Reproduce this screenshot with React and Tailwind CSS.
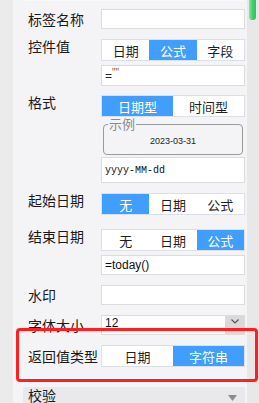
import React from "react";

const font = { fontFamily: '"Noto Sans CJK SC", "Noto Sans", sans-serif' };

function Seg({ items, active }) {
  return (
    <div className="flex h-[22px] w-[144px] border border-[#dcdfe6] bg-white">
      {items.map((t, i) => (
        <div
          key={t}
          className={
            "flex-1 flex items-center justify-center text-[13px] leading-none " +
            (i === active ? "bg-[#409eff] text-white" : "text-[#1f1f1f]")
          }
        >
          {t}
        </div>
      ))}
    </div>
  );
}

function Input({ children, h = "h-[20px]", cls = "" }) {
  return (
    <div className={"w-[144px] border border-[#dcdcdc] bg-white flex items-center px-[3px] " + h + " " + cls}>
      {children}
    </div>
  );
}

function Label({ children, top }) {
  return (
    <div
      className={
        "w-[73px] shrink-0 text-[14px] text-[#1a1a1a] " +
        (top ? "leading-[14px]" : "leading-[20px]")
      }
    >
      {children}
    </div>
  );
}

export default function App() {
  return (
    <div className="relative flex w-[259px] h-[403px] overflow-hidden bg-[#ebebeb]" style={font}>
      <div className="w-[13px] shrink-0 bg-[#ebebeb]" />
      <div className="w-[234px] shrink-0 bg-[#f4f4f6] pl-[10px] pr-[2px] flex flex-col">
        <div className="h-[3px] bg-[#f9f9fa]" />
        <div className="pl-[5px] flex flex-col">
          <div className="mt-[8px] flex items-center">
            <Label>标签名称</Label>
            <Input />
          </div>

          <div className="mt-[10px] flex items-start">
            <Label top>控件值</Label>
            <div className="flex flex-col">
              <Seg items={["日期", "公式", "字段"]} active={1} />
              <Input h="h-[21px]" cls="mt-[4px]">
                <span className="text-[12px] text-[#222]" style={{ fontFamily: '"Liberation Sans", sans-serif' }}>
                  =<span className="relative top-[-4px] text-[10px] text-[#a0522d]">""</span>
                </span>
              </Input>
            </div>
          </div>

          <div className="mt-[9px] flex items-start">
            <Label top>格式</Label>
            <div className="flex flex-col">
              <Seg items={["日期型", "时间型"]} active={0} />
              <fieldset className="ml-[2px] w-[140px] h-[38px] border border-[#9a9a9a] rounded-[4px] px-[4px] pb-[2px] m-0">
                <legend className="text-[13px] leading-[14px] text-[#8a8a8a] px-[1px]">示例</legend>
                <div
                  className="text-center text-[9px] leading-[12px] text-[#222] mt-[4px]"
                  style={{ fontFamily: '"Liberation Sans", sans-serif' }}
                >
                  2023-03-31
                </div>
              </fieldset>
              <Input h="h-[26px]" cls="mt-[2px]">
                <span className="text-[10px] text-[#111]" style={{ fontFamily: '"Liberation Mono", monospace' }}>
                  yyyy-MM-dd
                </span>
              </Input>
            </div>
          </div>

          <div className="mt-[10px] flex items-start">
            <Label top>起始日期</Label>
            <Seg items={["无", "日期", "公式"]} active={0} />
          </div>

          <div className="mt-[14px] flex items-start">
            <Label top>结束日期</Label>
            <div className="flex flex-col">
              <Seg items={["无", "日期", "公式"]} active={2} />
              <Input cls="mt-[4px]">
                <span className="text-[12px] text-[#111]" style={{ fontFamily: '"Liberation Sans", sans-serif' }}>
                  =today()
                </span>
              </Input>
            </div>
          </div>

          <div className="mt-[10px] flex items-center">
            <Label>水印</Label>
            <Input />
          </div>

          <div className="mt-[10px] flex items-center">
            <Label>字体大小</Label>
            <div className="w-[144px] h-[20px] flex border border-[#dcdcdc]">
              <div className="flex-1 bg-white px-[3px] flex items-start">
                <span className="text-[12px] leading-[14px] text-[#111]" style={{ fontFamily: '"Liberation Sans", sans-serif' }}>
                  12
                </span>
              </div>
              <div className="w-[19px] bg-[#d9d9dc] flex items-start justify-center pt-[3px]">
                <svg width="8" height="5" viewBox="0 0 8 5">
                  <path d="M0.5 0.5 L4 4 L7.5 0.5" fill="none" stroke="#555" strokeWidth="1.2" />
                </svg>
              </div>
            </div>
          </div>

          <div className="mt-[10px] flex items-center">
            <Label>返回值类型</Label>
            <Seg items={["日期", "字符串"]} active={1} />
          </div>
        </div>

        <div className="mt-[20px] h-[22px] bg-[#e9e9ec] flex items-start justify-between pl-[5px] pr-[8px]">
          <span className="text-[14px] leading-[16px] text-[#1a1a1a]">校验</span>
          <svg width="9" height="6" viewBox="0 0 9 6" className="mt-[8px]">
            <path d="M0 0 H9 L4.5 6 Z" fill="#8c8c8c" />
          </svg>
        </div>
      </div>
      <div className="w-[12px] shrink-0 bg-[#e8e8e8] pl-[2px] pr-[3px]">
        <div className="h-[20px] w-[7px] rounded-b-[3px] bg-gradient-to-r from-[#86e6a0] via-[#3fcf6c] to-[#34c163]" />
      </div>

      <div className="absolute left-[16px] top-[328px] w-[242px] h-[54px] border-[3px] border-[#ff1f1f] rounded-[4px]" />
    </div>
  );
}
